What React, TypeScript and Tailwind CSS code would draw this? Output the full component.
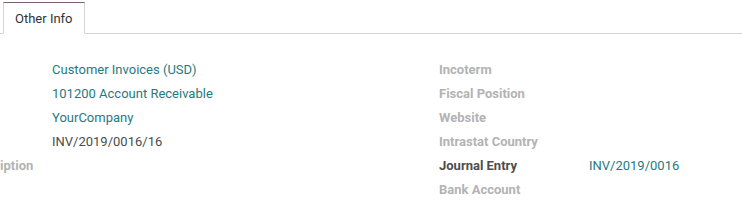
import React from "react";

const teal = "text-[#1f7a80]";

function Row({ label, value, labelClass, valueClass }: { label?: string; value?: string; labelClass: string; valueClass?: string }) {
  return (
    <div className="flex h-[24px] items-center leading-[24px]">
      <div className={`w-[150px] shrink-0 whitespace-nowrap font-bold ${labelClass}`}>{label}</div>
      <div className={`whitespace-nowrap ${valueClass ?? ""}`}>{value}</div>
    </div>
  );
}

export default function App() {
  const gray = "text-[#b3b3b3]";
  return (
    <div className="w-[742px] h-[211px] overflow-hidden bg-white font-['Roboto',sans-serif] text-[13px] text-[#4c4c4c]">
      <div className="flex h-[34px] border-b border-[#d4d4d4] pl-[3px] pt-[2px]">
        <div className="-mb-px flex h-[32px] items-center border border-[#d4d4d4] border-t-[#7c5d7a] border-b-white bg-white px-[11px] pt-[1px] text-[#333]">
          Other Info
        </div>
      </div>
      <div className="flex pt-[24px]">
        <div className="ml-[-98px] w-[537px] shrink-0">
          <Row value="Customer Invoices (USD)" labelClass={gray} valueClass={teal} />
          <Row value="101200 Account Receivable" labelClass={gray} valueClass={teal} />
          <Row value="YourCompany" labelClass={gray} valueClass={teal} />
          <Row value="INV/2019/0016/16" labelClass={gray} valueClass="text-[#4c4c4c]" />
          <Row label="Reference/Description" labelClass={gray} />
        </div>
        <div className="w-[303px] shrink-0">
          <Row label="Incoterm" labelClass={gray} />
          <Row label="Fiscal Position" labelClass={gray} />
          <Row label="Website" labelClass={gray} />
          <Row label="Intrastat Country" labelClass={gray} />
          <Row label="Journal Entry" value="INV/2019/0016" labelClass="text-[#4c4c4c]" valueClass={teal} />
          <Row label="Bank Account" labelClass={gray} />
        </div>
      </div>
    </div>
  );
}
